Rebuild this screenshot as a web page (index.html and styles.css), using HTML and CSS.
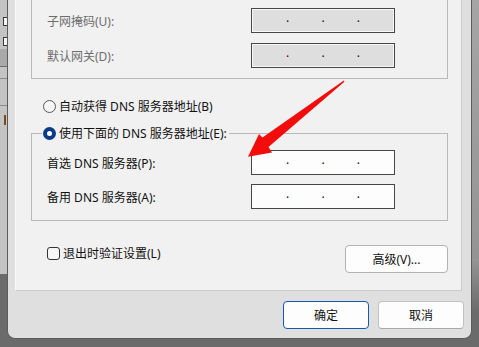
FILE: index.html
```html
<!DOCTYPE html>
<html lang="zh-CN">
  <head>
    <meta charset="UTF-8" />
    <meta name="viewport" content="width=device-width, initial-scale=1.0" />
    <title>Internet 协议版本 4 (TCP/IPv4) 属性</title>
    <link rel="stylesheet" href="styles.css">
  </head>
  <body>
    <div class="desk">
      <div class="behind">
        <div class="bg-line short"></div>
        <div class="bg-check"></div>
        <div class="bg-line"></div>
        <div class="bg-check"></div>
        <div class="bg-band"></div>
        <div class="bg-cell"></div>
        <div class="bg-cell tall"></div>
        <div class="bg-mark"></div>
      </div>

      <div class="window">
        <section class="page">
          <div class="group ip">
            <div class="row">
              <span class="label">子网掩码(U):</span>
              <div class="ipbox off"><span>.</span><span>.</span><span>.</span></div>
            </div>
            <div class="row">
              <span class="label">默认网关(D):</span>
              <div class="ipbox off"><span>.</span><span>.</span><span>.</span></div>
            </div>
          </div>

          <div class="choice auto">
            <span class="radio"></span>自动获得 DNS 服务器地址(B)
          </div>

          <fieldset class="group dns">
            <legend class="choice">
              <span class="radio on"></span>使用下面的 DNS 服务器地址(E):
            </legend>
            <div class="rows">
              <div class="row">
                <span class="label">首选 DNS 服务器(P):</span>
                <div class="ipbox"><span>.</span><span>.</span><span>.</span></div>
              </div>
              <div class="row">
                <span class="label">备用 DNS 服务器(A):</span>
                <div class="ipbox"><span>.</span><span>.</span><span>.</span></div>
              </div>
            </div>
          </fieldset>

          <div class="extra">
            <label class="check"><span class="box"></span>退出时验证设置(L)</label>
            <button class="btn adv" type="button">高级(V)...</button>
          </div>
        </section>

        <div class="actions">
          <button class="btn ok" type="button">确定</button>
          <button class="btn" type="button">取消</button>
        </div>
      </div>

      <div class="side"></div>
    </div>

    <!-- red pointer drawn over the dialog -->
    <svg class="arrow" width="479" height="347" viewBox="0 0 479 347">
      <polygon
        points="343.8,80.6 262.5,137.5 259,134 248,156.8 272,152.5 268.5,147 344.4,81.8"
        fill="#f20c0c"
      />
    </svg>
  </body>
</html>
```

FILE: styles.css
```css
* {
  box-sizing: border-box;
}
body {
  margin: 0;
  position: relative;
  width: 479px;
  height: 347px;
  overflow: hidden;
  background: #6b6b6b;
  font-family: "Noto Sans", "Noto Sans CJK SC", sans-serif;
  font-size: 12px;
  color: #111111;
}
.desk {
  display: flex;
  align-items: flex-start;
}

/* window behind the dialog */
.behind {
  width: 7px;
  height: 274px;
  background: #c4c4c4;
  display: flex;
  flex-direction: column;
}
.bg-line {
  height: 11px;
}
.bg-line.short {
  height: 17px;
}
.bg-check {
  width: 4px;
  height: 9px;
  margin-left: 3px;
  border: 1px solid #3a3a3a;
  border-right: none;
  background: #f4f4f4;
}
.bg-band {
  height: 18px;
  margin-top: 3px;
  background: #a9a9a9;
  border-bottom: 1px solid #6c6c6c;
}
.bg-cell {
  height: 12px;
  border-bottom: 1px solid #8a8a8a;
}
.bg-cell.tall {
  height: 27px;
}
.bg-mark {
  width: 3px;
  height: 10px;
  margin: 9px 0 0 4px;
  border-left: 2px solid #7a4a20;
}
.side {
  width: 7px;
  height: 347px;
  background: linear-gradient(#a5a5a5, #949494 75%, #6b6b6b 90%);
}

/* dialog */
.window {
  width: 465px;
  height: 339px;
  background: #dfdfdf;
  border: 1px solid #5c5c5c;
  border-top: none;
  border-radius: 0 0 8px 8px;
}
.page {
  width: 447px;
  height: 291px;
  margin-left: 7px;
  background: #f1f1f1;
  border-left: 1px solid #fbfbfb;
  border-right: 1px solid #cbcbcb;
  border-bottom: 1px solid #cbcbcb;
}
.group {
  width: 417px;
  margin: 0 0 0 15px;
  border: 1px solid #b9b9b9;
}
.ip {
  height: 79px;
  border-top: none;
  padding: 8px 0 0 15px;
  display: flex;
  flex-direction: column;
  gap: 10px;
  color: #6d6d6d;
}
.row {
  display: flex;
  align-items: center;
  height: 25px;
}
.label {
  width: 204px;
}
.ipbox {
  width: 144px;
  height: 25px;
  border: 1px solid #474747;
  background: #fdfdfd;
  display: flex;
  align-items: center;
  justify-content: space-evenly;
  padding: 0 2px;
  color: #111111;
}
.ipbox span {
  line-height: 12px;
  margin-bottom: 6px;
}
.ipbox.off {
  background: #dedede;
  box-shadow: inset 0 0 0 1px #f8f8f8;
}

.choice {
  display: flex;
  align-items: center;
  gap: 3px;
  height: 15px;
  line-height: 15px;
}
.auto {
  margin: 20px 0 0 27px;
}
.radio {
  width: 13px;
  height: 13px;
  border: 1px solid #575757;
  border-radius: 50%;
  background: #f6f6f6;
}
.radio.on {
  border: 4px solid #0a3b88;
  background: #ffffff;
}

.dns {
  margin-top: 12px;
  padding: 0 0 11px 0;
  min-width: 0;
}
.dns legend {
  margin-left: 10px;
  padding: 0 2px 0 1px;
}
.rows {
  margin-left: 15px;
  padding-top: 9px;
  display: flex;
  flex-direction: column;
  gap: 9px;
}

.extra {
  width: 401px;
  margin: 24px 0 0 31px;
  display: flex;
  justify-content: space-between;
  align-items: flex-start;
}
.check {
  display: flex;
  align-items: center;
  gap: 3px;
  margin-top: 1px;
  line-height: 15px;
}
.box {
  width: 13px;
  height: 13px;
  border: 1px solid #333333;
  border-radius: 3px;
  background: #f6f6f6;
}

.btn {
  width: 86px;
  height: 28px;
  padding: 0;
  font: inherit;
  color: #111111;
  background: #fdfdfd;
  border: 1px solid #c2c2c2;
  border-bottom-color: #a8a8a8;
  border-radius: 4px;
}
.btn.adv {
  width: 103px;
  border-color: #b3b3b3;
}
.btn.ok {
  border: 1px solid #1458b0;
}
.actions {
  display: flex;
  justify-content: flex-end;
  gap: 9px;
  margin-top: 10px;
  padding-right: 7px;
}

.arrow {
  position: absolute;
  left: 0;
  top: 0;
  pointer-events: none;
}
```
